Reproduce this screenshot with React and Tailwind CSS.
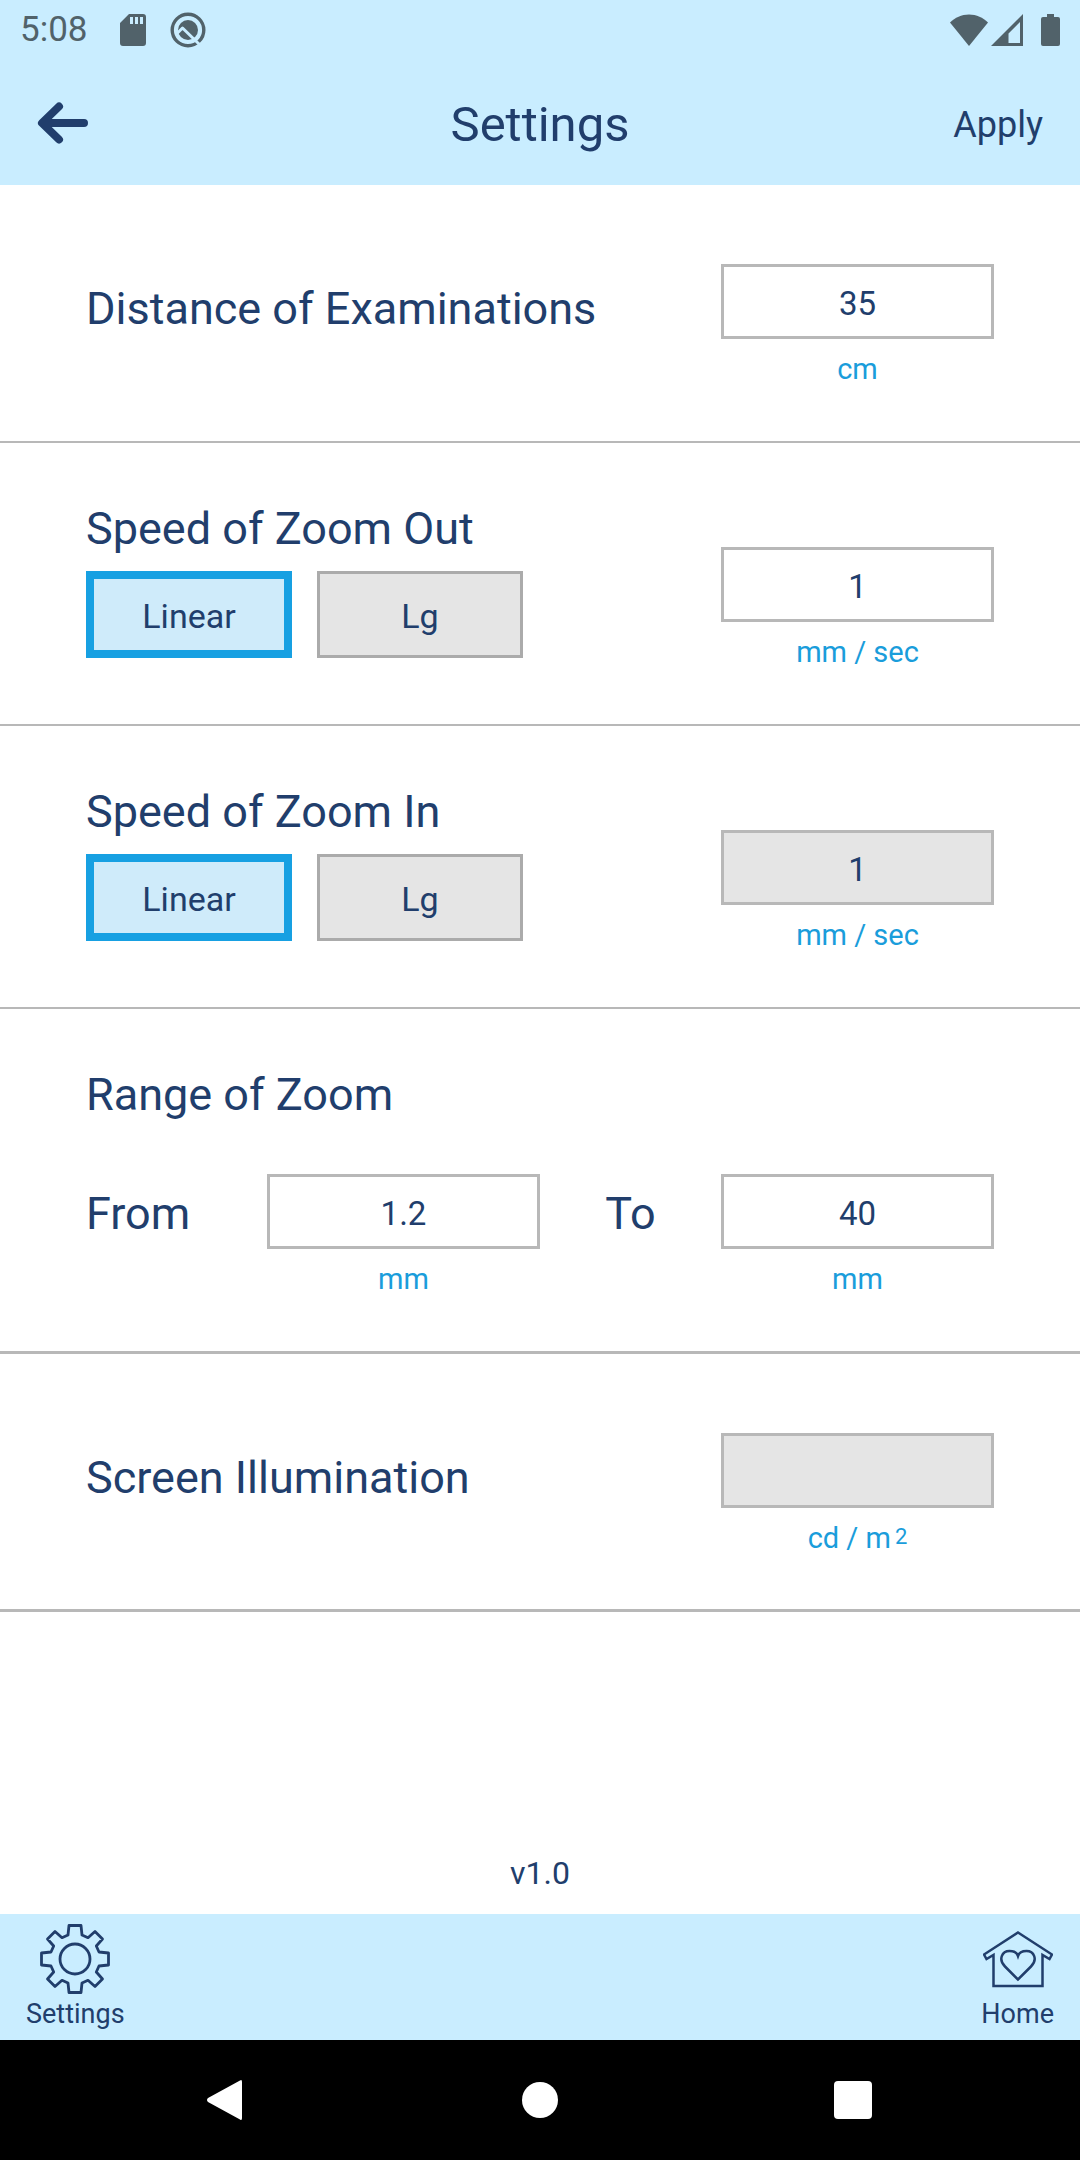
import React, { useState } from 'react';

function StatusBar() {
  return (
    <div className="flex items-center justify-between h-[60px] pl-5 pr-5 text-[#51626a]">
      <div className="flex items-center">
        <span className="text-[35px] leading-[60px]">5:08</span>
        <svg className="ml-8 w-[26px] h-8" viewBox="0 0 26 32" fill="currentColor" aria-hidden="true">
          <path fillRule="evenodd" d="M9 0H23a3 3 0 0 1 3 3V29a3 3 0 0 1-3 3H3a3 3 0 0 1-3-3V9ZM10 3v7h3V3ZM15 3v7h3V3ZM20 3v7h3V3Z" />
        </svg>
        <svg className="ml-6 w-9 h-9" viewBox="0 0 36 36" fill="none" aria-hidden="true">
          <circle cx="18" cy="18" r="15.8" stroke="currentColor" strokeWidth="3.4" />
          <circle cx="18" cy="18" r="10" fill="currentColor" />
          <path d="M7 21.5 12.500 16 30 33" stroke="#c9edff" strokeWidth="3" strokeLinejoin="round" />
        </svg>
      </div>
      <div className="flex items-center">
        <svg className="w-[38px] h-8" viewBox="0 0 38 32" fill="currentColor" aria-hidden="true">
          <path d="M0 8.500C5 3.500 11.500 0.500 19 0.500S33 3.500 38 8.500L19 32Z" />
        </svg>
        <svg className="ml-[3px] w-8 h-8" viewBox="0 0 32 32" fill="currentColor" aria-hidden="true">
          <path fillRule="evenodd" d="M32 0V32H0ZM29 8L17.500 19.500V29H29Z" />
        </svg>
        <svg className="ml-[18px] w-[19px] h-8" viewBox="0 0 19 32" fill="currentColor" aria-hidden="true">
          <path d="M6 0h7v3h4a2 2 0 0 1 2 2v25a2 2 0 0 1-2 2H2a2 2 0 0 1-2-2V5a2 2 0 0 1 2-2h4Z" />
        </svg>
      </div>
    </div>
  );
}

function Header() {
  return (
    <header className="bg-[#c9edff]">
      <StatusBar />
      <div className="grid grid-cols-[1fr_auto_1fr] items-center h-[125px] px-[37px]">
        <button type="button" aria-label="Back" className="justify-self-start">
          <svg className="w-[51px] h-[42px]" viewBox="0 0 51 42" fill="none" stroke="currentColor" strokeWidth="8" strokeLinecap="round" strokeLinejoin="round">
            <path d="M22 4.500 5 21 22 37.500M6 21H47" />
          </svg>
        </button>
        <h1 className="pt-1 text-[49px] leading-[60px]">Settings</h1>
        <button type="button" className="justify-self-end pt-1 text-[36px] leading-[60px]">Apply</button>
      </div>
    </header>
  );
}

function NumberField({ id, label, unit, value, onChange, disabled }) {
  return (
    <div className="flex flex-col items-center w-[273px] shrink-0">
      <input
        id={id}
        type="text"
        aria-label={label}
        className="w-full h-[75px] pt-1 border-3 border-[#b8b8b8] bg-white disabled:bg-[#e5e5e5] text-center text-[33px]"
        value={value}
        onChange={(e) => onChange(e.target.value)}
        disabled={disabled}
      />
      <label htmlFor={id} className="mt-3 text-[29px] leading-9 text-[#1a9ddb]">{unit}</label>
    </div>
  );
}

function ModeButton({ selected, onClick, children }) {
  return (
    <button
      type="button"
      aria-pressed={selected}
      onClick={onClick}
      className={`${selected ? 'border-8 border-[#17a0e2] bg-[#cfebfa]' : 'border-3 border-[#ababab] bg-[#e5e5e5]'} w-[206px] h-[87px] pt-1 text-[34px]`}
    >
      {children}
    </button>
  );
}

function SpeedRow({ title, id, mode, setMode, value, setValue, disabled }) {
  return (
    <section className="flex justify-between min-h-[283px] px-[86px] border-b-2 border-[#b8b8b8]">
      <div className="pt-[60px]">
        <h2 className="text-[45px] leading-[52px]">{title}</h2>
        <div className="flex gap-[25px] mt-4">
          <ModeButton selected={mode === 'linear'} onClick={() => setMode('linear')}>Linear</ModeButton>
          <ModeButton selected={mode === 'lg'} onClick={() => setMode('lg')}>Lg</ModeButton>
        </div>
      </div>
      <div className="pt-[104px]">
        <NumberField id={id} label={title} unit="mm / sec" value={value} onChange={setValue} disabled={disabled} />
      </div>
    </section>
  );
}

function TabBar() {
  return (
    <nav className="flex justify-between h-[126px] px-[26px] pt-[10px] bg-[#c9edff] text-[27px] leading-8">
      <a href="#settings" className="flex flex-col items-center">
        <svg className="w-[70px] h-[70px]" viewBox="0 0 70 70" fill="none" stroke="currentColor" strokeWidth="2.800" strokeLinejoin="round" aria-hidden="true">
          <path d="M29 1.500H41L42 11 48 13.700 55 7.500 62.500 15 56.300 22 59 28 68.500 29V41L59 42 56.300 48 62.500 55 55 62.500 48 56.300 42 59 41 68.500H29L28 59 22 56.300 15 62.500 7.500 55 13.700 48 11 42 1.500 41V29L11 28 13.700 22 7.500 15 15 7.500 22 13.700 28 11Z" />
          <circle cx="35" cy="35" r="15" />
        </svg>
        <span className="mt-1">Settings</span>
      </a>
      <a href="#home" className="flex flex-col items-center">
        <svg className="w-[70px] h-[70px]" viewBox="0 -7 70 70" fill="none" stroke="currentColor" strokeWidth="2.500" aria-hidden="true">
          <path d="M35 1.500 69 23.500 66.500 28 59.500 24V55H10.500V24L3.500 28 1 23.500Z" />
          <path d="M35 48.500 22 35.500C15 28.500 19 20 26.500 20 31 20 34 22 35 25 36 22 39 20 43.500 20 51 20 55 28.500 48 35.500Z" />
        </svg>
        <span className="mt-1">Home</span>
      </a>
    </nav>
  );
}

function SystemNav() {
  return (
    <div className="grid grid-cols-3 justify-items-center items-center h-[120px] px-[71px] bg-black text-white">
      <button type="button" aria-label="System back">
        <svg className="w-10 h-10" viewBox="0 0 40 40" fill="currentColor">
          <path d="M33 .500Q35 -1 35 2V38Q35 41 33 39.500L1 22Q-1 20 1 18Z" />
        </svg>
      </button>
      <button type="button" aria-label="System home" className="w-9 h-9 rounded-full bg-white" />
      <button type="button" aria-label="Recent apps" className="w-[38px] h-[38px] rounded-sm bg-white" />
    </div>
  );
}

function App() {
  const [distance, setDistance] = useState('35');
  const [outMode, setOutMode] = useState('linear');
  const [outSpeed, setOutSpeed] = useState('1');
  const [inMode, setInMode] = useState('linear');
  const [inSpeed, setInSpeed] = useState('1');
  const [from, setFrom] = useState('1.2');
  const [to, setTo] = useState('40');
  const [illumination, setIllumination] = useState('');

  return (
    <div className="flex flex-col min-h-screen bg-white text-[#213e6c] font-['Roboto',sans-serif]">
      <Header />
      <main className="flex flex-col flex-1">
        <section className="flex items-center justify-between min-h-[258px] px-[86px] pb-2 border-b-2 border-[#b8b8b8]">
          <h2 className="text-[45px] leading-[52px]">Distance of Examinations</h2>
          <div className="self-start pt-[79px]">
            <NumberField id="distance" label="Distance of Examinations" unit="cm" value={distance} onChange={setDistance} />
          </div>
        </section>

        <SpeedRow title="Speed of Zoom Out" id="speed-out" mode={outMode} setMode={setOutMode} value={outSpeed} setValue={setOutSpeed} />
        <SpeedRow title="Speed of Zoom In" id="speed-in" mode={inMode} setMode={setInMode} value={inSpeed} setValue={setInSpeed} disabled />

        <section className="min-h-[345px] px-[86px] pt-[60px] border-b-3 border-[#b8b8b8]">
          <h2 className="text-[45px] leading-[52px]">Range of Zoom</h2>
          <div className="grid grid-cols-[181px_273px_1fr_273px] mt-[53px] text-[45px] leading-[80px]">
            <span>From</span>
            <NumberField id="range-from" label="From" unit="mm" value={from} onChange={setFrom} />
            <span className="text-center">To</span>
            <NumberField id="range-to" label="To" unit="mm" value={to} onChange={setTo} />
          </div>
        </section>

        <section className="flex items-center justify-between min-h-[258px] px-[86px] pb-2 border-b-3 border-[#b8b8b8]">
          <h2 className="text-[45px] leading-[52px]">Screen Illumination</h2>
          <div className="self-start pt-[79px]">
            <NumberField
              id="illumination"
              label="Screen Illumination"
              unit={<>cd / m<sup className="top-0 ml-1 align-[4px] text-[22px] leading-none">2</sup></>}
              value={illumination}
              onChange={setIllumination}
              disabled
            />
          </div>
        </section>

        <p className="mt-auto pb-[21px] text-center text-[32px] leading-10">v1.0</p>
      </main>
      <TabBar />
      <SystemNav />
    </div>
  );
}

export default App;
